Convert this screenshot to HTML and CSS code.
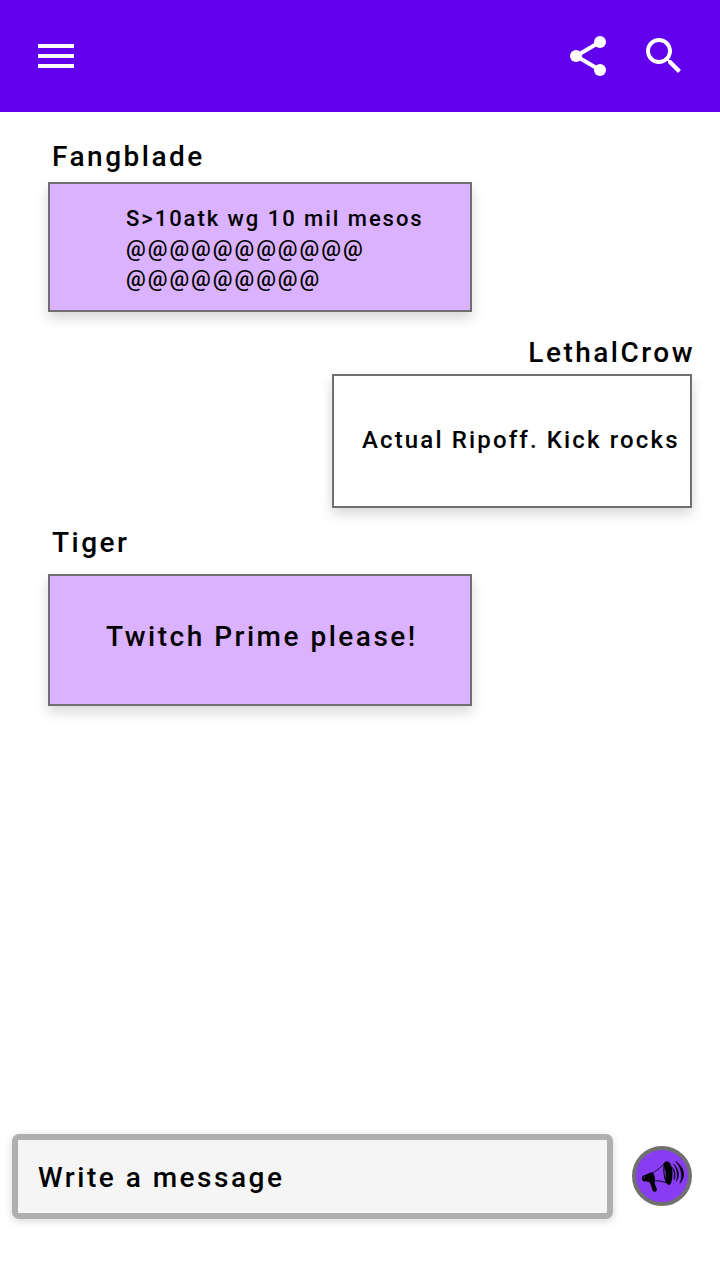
FILE: index.html
```html
<!DOCTYPE html>
<html lang="en">
<head>
<meta charset="utf-8">
<title>Chat</title>
<link rel="stylesheet" href="styles.css">
</head>
<body>
<div class="screen">
  <header class="bar">
    <svg class="icon" viewBox="0 0 24 24"><path d="M3 18h18v-2H3v2zm0-5h18v-2H3v2zm0-7v2h18V6H3z"/></svg>
    <svg class="icon share" viewBox="0 0 24 24"><path d="M18 5 6 12l12 7" fill="none" stroke="#fff" stroke-width="2"/><circle cx="18" cy="5" r="3"/><circle cx="6" cy="12" r="3"/><circle cx="18" cy="19" r="3"/></svg>
    <svg class="icon" viewBox="0 0 24 24"><path d="M15.5 14h-.79l-.28-.27C15.41 12.59 16 11.11 16 9.5 16 5.91 13.09 3 9.5 3S3 5.91 3 9.5 5.91 16 9.5 16c1.61 0 3.09-.59 4.23-1.57l.27.28v.79l5 4.99L20.49 19l-4.99-5zm-6 0C7.01 14 5 11.99 5 9.5S7.01 5 9.5 5 14 7.01 14 9.5 11.99 14 9.5 14z"/></svg>
  </header>
  <main class="chat">
    <section class="message first">
      <h2 class="name">Fangblade</h2>
      <p class="bubble trade">S&gt;10atk wg 10 mil mesos<br>@@@@@@@@@@@<br>@@@@@@@@@</p>
    </section>
    <section class="message own">
      <h2 class="name">LethalCrow</h2>
      <p class="bubble reply">Actual Ripoff. Kick rocks</p>
    </section>
    <section class="message last">
      <h2 class="name">Tiger</h2>
      <p class="bubble request">Twitch Prime please!</p>
    </section>
  </main>
  <footer class="composer">
    <div class="field">Write a message</div>
    <button class="send" aria-label="Send">
      <svg class="horn" viewBox="48 42 156 156">
        <path d="M66 126Q66 119 75 117L84 113Q92 108 100 110L105 126L104 138L106 148L111 160Q111 169 102 167L97 163L95 153L89 139L76 136Q66 138 66 126Z"/>
        <path d="M98 111Q119 100 136 79M104 134Q124 134 138 140" fill="none" stroke="#000" stroke-width="2.6"/>
        <path fill-rule="evenodd" d="M132 82Q137 73 145 77C155 84 159 101 157 124Q155 146 147 147C138 146 131 126 130 105Q129 89 132 82ZM134 92Q131 110 137 129Q138 109 134 92Z"/>
        <path d="M157 94Q171 112 162 132Q166 112 157 94ZM161 84Q186 111 169 136Q178 111 161 84ZM167 75Q208 108 180 142Q194 109 167 75Z" stroke="#000" stroke-width="1.4"/>
        <path d="M69 125l7-3" stroke="#883df2" stroke-width="2"/>
      </svg>
    </button>
  </footer>
</div>
</body>
</html>
```
FILE: styles.css
```css
* { box-sizing: border-box; }
body { margin: 0; font-family: Roboto, "Liberation Sans", sans-serif; font-weight: 500; color: #000; }
.screen { width: 720px; height: 1280px; display: flex; flex-direction: column; background: #fff; overflow: hidden; }
.bar { height: 112px; flex: none; background: #6200ee; display: flex; align-items: center; padding: 0 32px; gap: 28px; }
.icon { width: 48px; height: 48px; fill: #fff; display: block; }
.share { margin-left: auto; }
.chat { flex: 1; display: flex; flex-direction: column; padding: 29px 28px 0 48px; }
.message { display: flex; flex-direction: column; align-items: flex-start; }
.name { margin: 0; padding-left: 4px; font-size: 28px; line-height: 32px; font-weight: 500; letter-spacing: 2.5px; }
.bubble { margin: 0; width: 424px; border: 2px solid #707070; background: #dbb2ff; box-shadow: 0 6px 12px rgba(0, 0, 0, .16); white-space: nowrap; }
.first { gap: 9px; }
.trade { height: 130px; padding: 20px 0 0 76px; font-size: 22px; line-height: 30px; letter-spacing: 1.96px; }
.own { margin-top: 25px; gap: 5px; align-items: flex-end; }
.own .name { margin-right: -3px; }
.reply { width: 360px; height: 134px; padding: 48px 0 0 28px; background: #fff; font-size: 24px; line-height: 32px; letter-spacing: 2.14px; }
.last { margin-top: 19px; gap: 15px; }
.request { height: 132px; padding: 45px 0 0 56px; font-size: 28px; line-height: 32px; letter-spacing: 2.5px; }
.composer { display: flex; align-items: flex-start; padding: 0 28px 61px 12px; justify-content: space-between; }
.field { width: 601px; height: 85px; padding: 22px 20px 0; border: 6px solid #afafaf; border-radius: 7px; background: #f5f5f5; box-shadow: 0 2px 8px rgba(0, 0, 0, .16); font-size: 28px; line-height: 32px; letter-spacing: 2.5px; }
.send { width: 60px; height: 60px; margin-top: 12px; padding: 0; border: 4px solid #707070; border-radius: 50%; background: #883df2; }
.horn { display: block; width: 52px; height: 52px; }
```
